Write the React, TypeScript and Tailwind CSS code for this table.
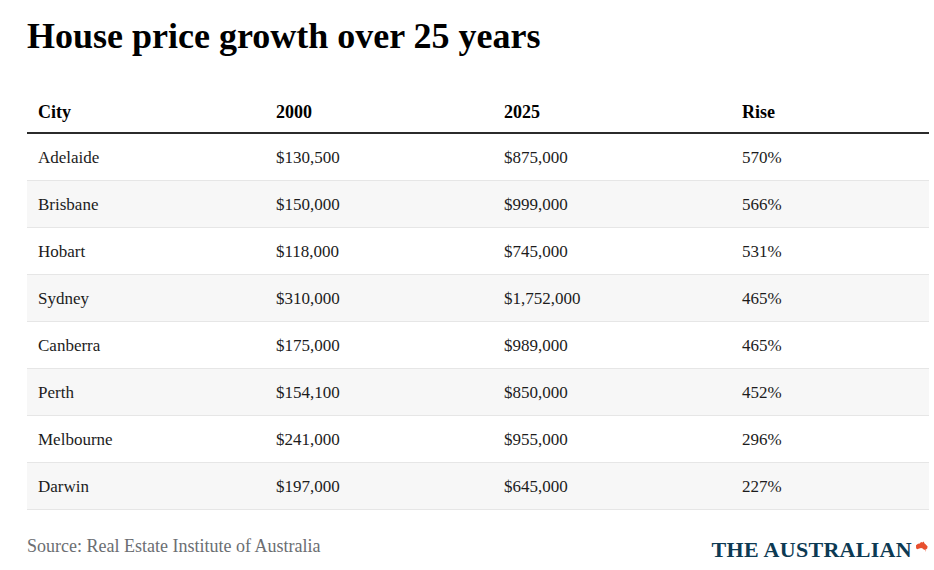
import React from "react";

const rows = [
  ["Adelaide", "$130,500", "$875,000", "570%"],
  ["Brisbane", "$150,000", "$999,000", "566%"],
  ["Hobart", "$118,000", "$745,000", "531%"],
  ["Sydney", "$310,000", "$1,752,000", "465%"],
  ["Canberra", "$175,000", "$989,000", "465%"],
  ["Perth", "$154,100", "$850,000", "452%"],
  ["Melbourne", "$241,000", "$955,000", "296%"],
  ["Darwin", "$197,000", "$645,000", "227%"],
];

const cols = "grid grid-cols-[238px_228px_238px_1fr]";

function AusMap() {
  return (
    <svg width="14" height="11" viewBox="0 0 14 11" className="ml-[3px] mt-[3px]">
      <path
        d="M1 4.2 L3 2.8 L4.8 2.4 L6 1 L7.4 1.6 L8.6 0.4 L9.6 2.6 L10.8 3.4 L12.6 5.6 L12.2 7.6 L10.6 8.8 L9 8.7 L7.6 7.4 L6.1 7 L4.2 7.6 L2.2 8.2 L1.1 7.2 Z"
        fill="#e8502f"
      />
      <path d="M10 9.6 L11.2 9.6 L10.8 10.6 Z" fill="#e8502f" />
    </svg>
  );
}

export default function App() {
  return (
    <div className="h-[570px] w-[934px] bg-white pl-[27px] pt-[18px] font-['Liberation_Serif',_'Times_New_Roman',_serif]">
      <div className="w-[902px]">
        <h1 className="text-[36px] font-bold leading-[36px] text-black">
          House price growth over 25 years
        </h1>

        <div className="mt-[38px]">
          <div className={`${cols} border-b-2 border-[#2b2b2b] py-[8px] text-[18px] font-bold leading-[24px] text-black`}>
            <div className="pl-[11px]">City</div>
            <div className="pl-[11px]">2000</div>
            <div className="pl-[11px]">2025</div>
            <div className="pl-[11px]">Rise</div>
          </div>
          {rows.map((r, i) => (
            <div
              key={r[0]}
              className={`${cols} border-b border-[#e6e6e6] pb-[10px] pt-[12px] text-[17px] leading-[24px] text-[#1c1c1c] ${
                i % 2 === 1 ? "bg-[#f7f7f7]" : "bg-white"
              }`}
            >
              {r.map((c, j) => (
                <div key={j} className="pl-[11px]">
                  {c}
                </div>
              ))}
            </div>
          ))}
        </div>

        <div className="mt-[24px] flex items-start justify-between">
          <div className="text-[18px] leading-[24px] text-[#6b6e72]">
            Source: Real Estate Institute of Australia
          </div>
          <div className="flex items-start pt-[4px]">
            <span className="text-[22px] font-bold leading-[24px] tracking-[0.3px] text-[#0d3a53]">
              THE AUSTRALIAN
            </span>
            <AusMap />
          </div>
        </div>
      </div>
    </div>
  );
}
